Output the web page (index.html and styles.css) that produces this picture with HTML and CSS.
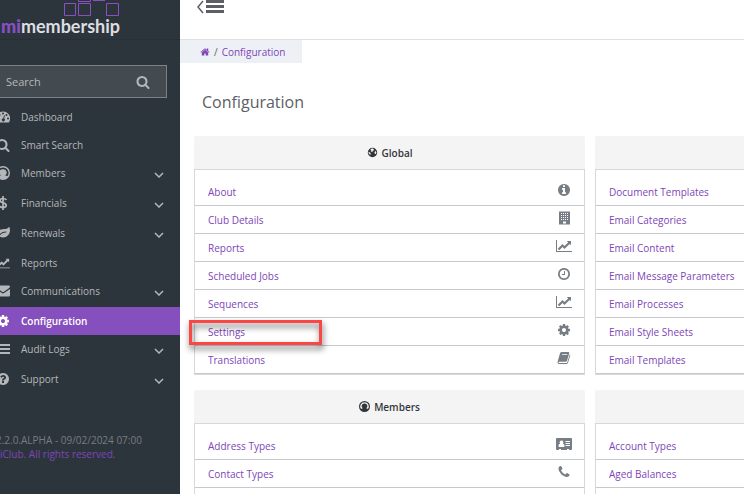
FILE: index.html
```html
<!DOCTYPE html>
<html lang="en">
<head>
<meta charset="utf-8">
<title>Configuration</title>
<link rel="stylesheet" href="styles.css">
</head>
<body>
<svg class="sprite" aria-hidden="true">
  <symbol id="search" viewBox="0 0 1792 1792"><path d="M1216 832q0-185-131.5-316.5t-316.5-131.5-316.5 131.5-131.5 316.5 131.5 316.5 316.5 131.5 316.5-131.5 131.5-316.5zm512 832q0 52-38 90t-90 38q-54 0-90-38l-343-342q-179 124-399 124-143 0-273.5-55.5t-225-150-150-225-55.5-273.5 55.5-273.5 150-225 225-150 273.5-55.5 273.5 55.5 225 150 150 225 55.5 273.5q0 220-124 399l343 343q37 37 37 90z"/></symbol>
  <symbol id="home" viewBox="0 0 1792 1792"><path d="M1472 992v480q0 26-19 45t-45 19h-384v-384h-256v384h-384q-26 0-45-19t-19-45v-480q0-1 .5-3t.5-3l575-474 575 474q1 2 1 6zm223-69l-62 74q-8 9-21 11h-3q-13 0-21-7l-692-577-692 577q-12 8-24 7-13-2-21-11l-62-74q-8-10-7-23.5t11-21.5l719-599q32-26 76-26t76 26l244 204v-195q0-14 9-23t23-9h192q14 0 23 9t9 23v408l219 182q10 8 11 21.5t-7 23.5z"/></symbol>
  <symbol id="cog" viewBox="0 0 1792 1792"><path d="M1152 896q0-106-75-181t-181-75-181 75-75 181 75 181 181 75 181-75 75-181zm512-109v222q0 12-8 23t-20 13l-185 28q-19 54-39 91 35 50 107 138 10 12 10 25t-9 23q-27 37-99 108t-94 71q-12 0-26-9l-138-108q-44 23-91 38-16 136-29 186-7 28-36 28h-222q-14 0-24.5-8.5t-11.5-21.5l-28-184q-49-16-90-37l-141 107q-10 9-25 9-14 0-25-11-126-114-165-168-7-10-7-23 0-12 8-23 15-21 51-66.5t54-70.5q-27-50-41-99l-183-27q-13-2-21-12.5t-8-23.5v-222q0-12 8-23t19-13l186-28q14-46 39-92-40-57-107-138-10-12-10-24 0-10 9-23 26-36 98.5-107.5t94.5-71.5q13 0 26 10l138 107q44-23 91-38 16-136 29-186 7-28 36-28h222q14 0 24.5 8.5t11.5 21.5l28 184q49 16 90 37l142-107q9-9 24-9 13 0 25 10 129 119 165 170 7 8 7 22 0 12-8 23-15 21-51 66.5t-54 70.5q26 50 41 98l183 28q13 2 21 12.5t8 23.5z"/></symbol>
  <symbol id="info" viewBox="0 0 1792 1792"><path d="M1152 1376v-160q0-14-9-23t-23-9h-96v-512q0-14-9-23t-23-9h-320q-14 0-23 9t-9 23v160q0 14 9 23t23 9h96v320h-96q-14 0-23 9t-9 23v160q0 14 9 23t23 9h448q14 0 23-9t9-23zm-128-896v-160q0-14-9-23t-23-9h-192q-14 0-23 9t-9 23v160q0 14 9 23t23 9h192q14 0 23-9t9-23zm640 416q0 209-103 385.5t-279.5 279.5-385.5 103-385.5-103-279.5-279.5-103-385.5 103-385.5 279.5-279.5 385.5-103 385.5 103 279.5 279.5 103 385.5z"/></symbol>
  <symbol id="chart" viewBox="0 0 2048 1792"><path d="M2048 1536v128h-2048v-1536h128v1408h1920zm-128-1248v435q0 21-19.5 29.5t-35.5-7.5l-121-121-633 633q-10 10-23 10t-23-10l-233-233-416 416-192-192 585-585q10-10 23-10t23 10l233 233 464-464-121-121q-16-16-7.5-35.5t29.5-19.5h435q14 0 23 9t9 23z"/></symbol>
  <symbol id="clock" viewBox="0 0 1792 1792"><path d="M1024 544v448q0 14-9 23t-23 9h-320q-14 0-23-9t-9-23v-64q0-14 9-23t23-9h224v-352q0-14 9-23t23-9h64q14 0 23 9t9 23zm416 352q0-148-73-273t-198-198-273-73-273 73-198 198-73 273 73 273 198 198 273 73 273-73 198-198 73-273zm224 0q0 209-103 385.5t-279.5 279.5-385.5 103-385.5-103-279.5-279.5-103-385.5 103-385.5 279.5-279.5 385.5-103 385.5 103 279.5 279.5 103 385.5z"/></symbol>
  <symbol id="phone" viewBox="0 0 1792 1792"><path d="M1600 1240q0 27-10 70.5t-21 68.5q-21 50-122 106-94 51-186 51-27 0-52.5-3.5t-57.5-12.5-47.5-14.5-55.5-20.5-49-18q-98-35-175-83-128-79-264.5-215.5t-215.5-264.5q-48-77-83-175-3-9-18-49t-20.5-55.5-14.5-47.5-12.5-57.5-3.5-52.5q0-92 51-186 56-101 106-122 25-11 68.5-21t70.5-10q14 0 21 3 18 6 53 76 11 19 30 54t35 63.5 31 53.5q3 4 17.5 25t21.5 35.5 7 28.5q0 20-28.5 50t-62 55-62 53-28.5 46q0 9 5 22.5t8.5 20.5 14 24 11.5 19q76 137 174 235t235 174q2 1 19 11.5t24 14 20.5 8.5 22.5 5q18 0 46-28.5t53-62 55-62 50-28.5q14 0 28.5 7t35.5 21.5 25 17.5q25 15 53.5 31t63.5 35 54 30q70 35 76 53 3 7 3 21z"/></symbol>
  <symbol id="question" viewBox="0 0 1792 1792"><path d="M1024 1376v-192q0-14-9-23t-23-9h-192q-14 0-23 9t-9 23v192q0 14 9 23t23 9h192q14 0 23-9t9-23zm256-672q0-88-55.5-163t-138.5-116-170-41q-243 0-371 213-15 24 8 42l132 100q7 6 19 6 16 0 25-12 53-68 86-92 34-24 86-24 48 0 85.5 26t37.5 59q0 38-20 61t-68 45q-63 28-115.5 86.5t-52.5 125.5v36q0 14 9 23t23 9h192q14 0 23-9t9-23q0-19 21.5-49.5t54.5-49.5q32-18 49-28.5t46-35 44.5-48 28-60.5 12.5-81zm384 192q0 209-103 385.5t-279.5 279.5-385.5 103-385.5-103-279.5-279.5-103-385.5 103-385.5 279.5-279.5 385.5-103 385.5 103 279.5 279.5 103 385.5z"/></symbol>
  <symbol id="gauge" viewBox="0 0 14 14"><path fill-rule="evenodd" d="M7 1.5a7 7 0 0 0-6 10.7q.2.3.6.3h10.8q.4 0 .6-.3A7 7 0 0 0 7 1.500zM2 7.500a1 1 0 1 1 0 2 1 1 0 0 1 0-2zM3.500 4a1 1 0 1 1 0 2 1 1 0 0 1 0-2zM7 2.500a1 1 0 1 1 0 2 1 1 0 0 1 0-2zM10.500 4a1 1 0 1 1 0 2 1 1 0 0 1 0-2zM12 7.500a1 1 0 1 1 0 2 1 1 0 0 1 0-2zM8.100 5.200l.9.2-.9 3.200a1.500 1.500 0 1 1-.9-.2z"/></symbol>
  <symbol id="user" viewBox="0 0 14 14"><path fill-rule="evenodd" d="M7 0a7 7 0 1 1 0 14A7 7 0 0 1 7 0zM7 1.500a5.500 5.500 0 0 0-4.400 8.800C3.400 9.800 4.200 9.700 4.900 9.300A3.300 3.300 0 0 1 7 3.200a3.300 3.300 0 0 1 2.100 6.100c.7.400 1.500.5 2.300 1A5.500 5.500 0 0 0 7 1.500z"/></symbol>
  <symbol id="dollar" viewBox="0 0 14 14"><path d="M10.500 3.800C9.500 2.900 8.300 2.500 7 2.500c-1.700 0-2.900.8-2.900 2.100C4.100 7.600 10.200 6 10.200 9.300c0 1.500-1.300 2.300-3.200 2.300-1.500 0-2.800-.6-3.700-1.500M7 0v14" fill="none" stroke="currentColor" stroke-width="1.700"/></symbol>
  <symbol id="leaf" viewBox="0 0 14 14"><path fill-rule="evenodd" d="M13.400 1.200c.4 1 .6 2 .6 3 0 4-3 7.200-7 7.200-1.500 0-2.600-.5-3.500-.8-.7 0-1.300 1.700-2 1.700-.6 0-1.100-.6-1.100-1 0-.6 1-1.300 1.200-1.800C1 4.900 3.200 3.500 6.500 3.300c2.500-.2 4.500 0 5.900-1.700.3-.5.700-.7 1-.4zM10 5.500C7.200 5.500 5 6.600 3.400 8.600c-.3.500.3 1 .7.600C5.700 7.300 7.300 6.500 10 6.500c.6 0 .6-1 0-1z"/></symbol>
  <symbol id="envelope" viewBox="0 0 14 14"><path d="M0 4.900l5.600 3.900q1.400 1 2.800 0L14 4.900v6.400q0 1.200-1.200 1.200H1.200Q0 12.500 0 11.300zM1.200 1.500h11.600Q14 1.500 14 2.600c0 .6-.4 1.100-.9 1.500L8 7.700q-1 .7-2 0L.9 4.100C.4 3.700 0 3.200 0 2.600q0-1.100 1.200-1.100z"/></symbol>
  <symbol id="bars" viewBox="0 0 14 14"><path d="M0 2h14v2H0zm0 4h14v2H0zm0 4h14v2H0z"/></symbol>
  <symbol id="building" viewBox="0 0 14 14"><path fill-rule="evenodd" d="M2 .5h11v13H2zM4 2v1h1V2zm2 0v1h1V2zm2 0v1h1V2zm2 0v1h1V2zM4 4v1h1V4zm2 0v1h1V4zm2 0v1h1V4zm2 0v1h1V4zM4 6v1h1V6zm2 0v1h1V6zm2 0v1h1V6zm2 0v1h1V6zM4 8v1h1V8zm2 0v1h1V8zm2 0v1h1V8zm2 0v1h1V8zM6 10.500v2h3v-2z"/></symbol>
  <symbol id="book" viewBox="0 0 14 14"><path fill-rule="evenodd" d="M4.800 1h6.500q1.200 0 .9 1.200L10 9.700q-.3 1.100-1.400 1.100H2c-.7 0-.8 1.200.2 1.200h7.200q.5 0 .8-.6l2.500-8q.8.500.5 1.200L11 11.700q-.5 1.300-1.700 1.300H2.200C.8 13 .2 11.500.7 10.400L3 2.300Q3.500 1 4.800 1zm.4 2.200L5 4h5.200l.2-.8z"/></symbol>
  <symbol id="card" viewBox="0 0 16 14"><path fill-rule="evenodd" d="M1 1h14q1 0 1 1v10q0 1-1 1h-2v-1h-2v1H5v-1H3v1H1q-1 0-1-1V2q0-1 1-1zm4.500 2.500a1.900 1.900 0 0 0-1.400 3.200C3.100 6.900 2.500 8 2.500 9q0 1 1 1h4q1 0 1-1c0-1-.6-2.100-1.600-2.300A1.900 1.900 0 0 0 5.500 3.500zM9.500 4v1H14V4zm0 2v1H14V6zm0 2v1H14V8z"/></symbol>
  <symbol id="globe" viewBox="0 0 14 14"><path fill-rule="evenodd" d="M7 1a6 6 0 1 1 0 12A6 6 0 0 1 7 1zM7.500 2L5 2.300 4.500 4l1.300.8L5 6.500l1.800-.3L8 4.500 9.200 3.800zM2.200 6l-.3 1.500 2 2.500 1-.8-.7-1.800zM11 5l-1.500 1.500.5 2 1.200.5.800-2z"/></symbol>
  <symbol id="chevron" viewBox="0 0 10 6"><path d="M1 1l4 4 4-4" fill="none" stroke="currentColor" stroke-width="1.500"/></symbol>
</svg>

<div class="app">
  <aside class="sidebar">
    <div class="brand">
      <svg class="brand-mark" viewBox="0 0 56 16" aria-hidden="true"><path d="M.5 3.500h11v12H.5zM14.500 3.500h12v12h-12zM42.500 3.500h12v12h-12zM14.500-9h12V1.500h-12zM29 .5h12" fill="none" stroke="currentColor"/></svg>
      <span class="brand-name"><b>mi</b>membership</span>
    </div>
    <form class="search">
      <input class="search-input" type="text" placeholder="Search" aria-label="Search">
      <button class="search-button" type="button" aria-label="Run search"><svg class="icon"><use href="#search"/></svg></button>
    </form>
    <nav class="menu">
      <a class="item" href="#"><svg class="icon"><use href="#gauge"/></svg>Dashboard</a>
      <a class="item" href="#"><svg class="icon"><use href="#search"/></svg>Smart Search</a>
      <a class="item group" href="#"><svg class="icon"><use href="#user"/></svg>Members<svg class="chevron"><use href="#chevron"/></svg></a>
      <a class="item group" href="#"><svg class="icon"><use href="#dollar"/></svg>Financials<svg class="chevron"><use href="#chevron"/></svg></a>
      <a class="item group" href="#"><svg class="icon"><use href="#leaf"/></svg>Renewals<svg class="chevron"><use href="#chevron"/></svg></a>
      <a class="item" href="#"><svg class="icon"><use href="#chart"/></svg>Reports</a>
      <a class="item group" href="#"><svg class="icon"><use href="#envelope"/></svg>Communications<svg class="chevron"><use href="#chevron"/></svg></a>
      <a class="item active" href="#"><svg class="icon"><use href="#cog"/></svg>Configuration</a>
      <a class="item group" href="#"><svg class="icon"><use href="#bars"/></svg>Audit Logs<svg class="chevron"><use href="#chevron"/></svg></a>
      <a class="item group" href="#"><svg class="icon"><use href="#question"/></svg>Support<svg class="chevron"><use href="#chevron"/></svg></a>
    </nav>
    <footer class="version">
      <div>2.2.0.ALPHA - 09/02/2024 07:00</div>
      <a href="#">iClub. All rights reserved.</a>
    </footer>
  </aside>

  <main class="main">
    <header class="topbar">
      <button class="toggle" type="button" aria-label="Toggle menu"><svg class="toggle-icon" viewBox="0 0 30 14"><path d="M7 1L2 7l5 6" fill="none" stroke="currentColor" stroke-width="1.500"/><path d="M10 0h18v3H10zm0 5h18v3H10zm0 5h18v3H10z"/></svg></button>
    </header>
    <nav class="crumbs"><a href="#" aria-label="Home"><svg class="icon"><use href="#home"/></svg></a><span>/</span><a href="#">Configuration</a></nav>
    <h1 class="title">Configuration</h1>
    <div class="cards">
      <section class="card">
        <h2 class="card-head"><svg class="icon"><use href="#globe"/></svg>Global</h2>
        <ul class="rows">
          <li><a href="#">About</a><svg class="icon"><use href="#info"/></svg></li>
          <li><a href="#">Club Details</a><svg class="icon"><use href="#building"/></svg></li>
          <li><a href="#">Reports</a><svg class="icon"><use href="#chart"/></svg></li>
          <li><a href="#">Scheduled Jobs</a><svg class="icon"><use href="#clock"/></svg></li>
          <li><a href="#">Sequences</a><svg class="icon"><use href="#chart"/></svg></li>
          <li class="marked"><a href="#">Settings</a><svg class="icon"><use href="#cog"/></svg></li>
          <li><a href="#">Translations</a><svg class="icon"><use href="#book"/></svg></li>
        </ul>
      </section>
      <section class="card">
        <div class="card-head"></div>
        <ul class="rows">
          <li><a href="#">Document Templates</a></li>
          <li><a href="#">Email Categories</a></li>
          <li><a href="#">Email Content</a></li>
          <li><a href="#">Email Message Parameters</a></li>
          <li><a href="#">Email Processes</a></li>
          <li><a href="#">Email Style Sheets</a></li>
          <li><a href="#">Email Templates</a></li>
        </ul>
      </section>
      <section class="card">
        <h2 class="card-head"><svg class="icon"><use href="#user"/></svg>Members</h2>
        <ul class="rows more">
          <li><a href="#">Address Types</a><svg class="icon"><use href="#card"/></svg></li>
          <li><a href="#">Contact Types</a><svg class="icon"><use href="#phone"/></svg></li>
        </ul>
      </section>
      <section class="card">
        <div class="card-head"></div>
        <ul class="rows more">
          <li><a href="#">Account Types</a></li>
          <li><a href="#">Aged Balances</a></li>
        </ul>
      </section>
    </div>
  </main>
</div>
</body>
</html>
```
FILE: styles.css
```css
*, *::after { box-sizing: border-box; }

body {
  margin: 0;
  height: 100vh;
  overflow: hidden;
  background: #fff;
  font: 10px/16px "Open Sans", sans-serif;
  color: #5c6066;
}

a { color: #7d45b8; text-decoration: none; }
svg { display: block; fill: currentColor; flex: none; }
.sprite { display: none; }
.icon { width: 14px; height: 14px; }

.app { display: flex; min-height: 100vh; }

/* Sidebar: slid slightly off the left edge of the window */
.sidebar {
  flex: none;
  width: 200px;
  margin-left: -20px;
  background: #2d353c;
  color: #b4b7ba;
}

.brand {
  height: 40px;
  padding-left: 21px;
  border-bottom: 1px solid #283037;
  color: #8a4fc4;
}
.brand-mark { width: 56px; height: 16px; margin-left: 63px; }
.brand-name {
  display: block;
  font: 700 18px/20px Lato, sans-serif;
  color: #dcdee0;
}
.brand-name b { color: #8a4fc4; }

.search {
  display: flex;
  height: 33px;
  margin: 25px 13px 5px 0;
  border: 1px solid #7d8286;
  background: #444b50;
}
.search-input {
  flex: 1;
  min-width: 0;
  padding: 0 0 0 25px;
  border: 0;
  background: none;
  font: 11px/16px "Open Sans", sans-serif;
  color: #b4b7ba;
}
.search-input::placeholder { color: #b4b7ba; opacity: 1; }
.search-button {
  padding: 0 16px;
  border: 0;
  background: none;
  color: #b4b7ba;
}

.item {
  display: flex;
  align-items: center;
  gap: 11px;
  height: 28px;
  padding: 0 16px;
  color: #b4b7ba;
}
.group { height: 30px; padding-bottom: 2px; }
.chevron { width: 10px; height: 6px; margin: 4px 0 0 auto; }
.active { background: #854fbd; color: #fff; font-weight: 600; }

.version { padding: 38px 16px; color: #777c80; }
.version div, .version a { display: block; line-height: 14px; }
.version a { padding-left: 4px; color: #7d45b8; }

.main { flex: 1; min-width: 0; }

.topbar { height: 40px; padding-left: 16px; border-bottom: 1px solid #e0e0e0; }
.toggle { display: block; padding: 0; border: 0; background: none; color: #5c6066; }
.toggle-icon { width: 30px; height: 14px; }

.crumbs {
  display: flex;
  align-items: center;
  gap: 4px;
  width: max-content;
  height: 23px;
  padding: 0 17px 0 20px;
  background: #edf1f5;
}
.crumbs .icon { width: 10px; height: 10px; }

.title { margin: 28px 22px 23px; font-size: 16px; line-height: 22px; font-weight: 500; }

.cards {
  display: grid;
  grid-template-columns: repeat(2, minmax(391px, 1fr));
  gap: 15px 10px;
  padding-left: 14px;
}
.card-head {
  display: flex;
  align-items: center;
  justify-content: center;
  gap: 4px;
  height: 33px;
  margin: 0;
  background: #f4f4f4;
  border-radius: 2px 2px 0 0;
  font-size: 10px;
  font-weight: 600;
  color: #33373b;
}
.card-head .icon { width: 11px; height: 11px; }

.rows { margin: 0; padding: 8px 0 0; list-style: none; border: 1px solid #d8d8da; }
.more { padding-bottom: 28px; }
.rows li {
  position: relative;
  display: flex;
  align-items: center;
  justify-content: space-between;
  height: 28px;
  padding: 0 12px 0 13px;
  border-bottom: 1px solid #c8c9cd;
}
.rows .icon { width: 16px; margin-bottom: 4px; color: #777d84; }

/* Highlight box drawn over the row */
.marked::after {
  content: "";
  position: absolute;
  left: -6px;
  top: 2px;
  width: 133px;
  height: 25px;
  border: 3px solid #fb4646;
  filter: drop-shadow(1px 4px 3px rgba(0, 0, 0, .6));
  z-index: 1;
}
```
